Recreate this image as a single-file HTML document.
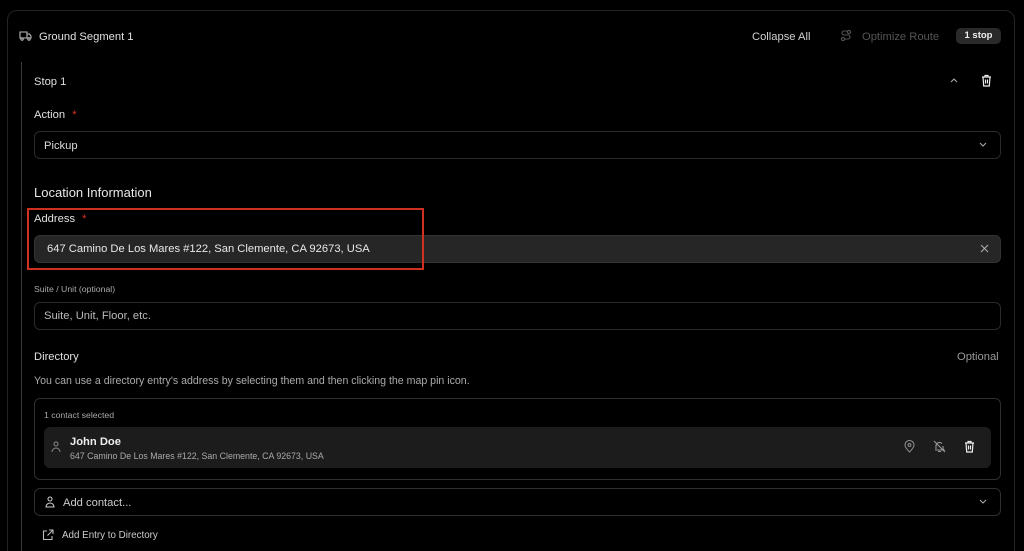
<!DOCTYPE html>
<html style="width:1024px;height:551px;overflow:hidden"><head><meta charset="utf-8"><style>
*{box-sizing:border-box;margin:0;padding:0}
body{width:1024px;height:551px;background:#000;font-family:"Liberation Sans",sans-serif;color:#e8e8e8;position:relative;overflow:hidden}
.a{position:absolute;white-space:nowrap;line-height:1}
.card{position:absolute;left:7px;top:10px;width:1008px;height:541px;border:1px solid #242424;border-bottom:none;border-radius:10px 10px 0 0}
.vl{position:absolute;left:21px;top:62px;width:1px;height:489px;background:#3a3a3a}
.box{position:absolute;left:34px;width:967px;border:1px solid #2a2a2a;border-radius:6px}
.red{color:#e0332a}
svg{position:absolute}
</style></head><body>
<div class="card"></div>
<div class="vl"></div>
<svg style="left:19px;top:30px" width="13" height="12" viewBox="0 0 13 12" fill="none" stroke="#bbb" stroke-width="1.1"><path d="M1 2h7v6H1zM8 4h2.5l1.5 2v2H8"/><circle cx="3" cy="9" r="1.2"/><circle cx="10" cy="9" r="1.2"/></svg>
<div class="a" style="left:39px;top:32px;font-size:11.2px;color:#e0e0e0">Ground Segment 1</div>
<div class="a" style="left:752px;top:32px;font-size:11.2px;color:#d0d0d0">Collapse All</div>
<svg style="left:840px;top:29px" width="12" height="13" viewBox="0 0 12 13" fill="none" stroke="#555" stroke-width="1.1"><circle cx="3" cy="10" r="1.6"/><circle cx="9" cy="3" r="1.6"/><path d="M4.6 10H8a2 2 0 0 0 0-4H4a2 2 0 0 1 0-4h3.4"/></svg>
<div class="a" style="left:862px;top:32px;font-size:11.2px;color:#555">Optimize Route</div>
<div class="a" style="left:956px;top:28px;width:45px;height:16px;background:#2a2a2a;border-radius:5px;font-size:9.5px;font-weight:bold;text-align:center;line-height:16px;color:#eee">1 stop</div>

<div class="a" style="left:34px;top:77px;font-size:11.2px;color:#e0e0e0">Stop 1</div>
<svg style="left:949px;top:77px" width="10" height="7" viewBox="0 0 10 7" fill="none" stroke="#aaa" stroke-width="1.1"><path d="M2 5l3-3 3 3"/></svg>
<svg style="left:981px;top:74px" width="11" height="13" viewBox="0 0 11 13" fill="none" stroke="#eee" stroke-width="1.2"><path d="M1 3h9M4 3V1.5h3V3M2 3l.7 9h5.6L9 3M4.5 5.5v4M6.5 5.5v4"/></svg>

<div class="a" style="left:34px;top:110px;font-size:11.2px;color:#e0e0e0">Action <span class="red" style="margin-left:4px">*</span></div>
<div class="box" style="top:131px;height:28px"></div>
<div class="a" style="left:44px;top:141px;font-size:11.2px;color:#ddd">Pickup</div>
<svg style="left:978px;top:141px" width="10" height="7" viewBox="0 0 10 7" fill="none" stroke="#aaa" stroke-width="1.1"><path d="M2 2l3 3 3-3"/></svg>

<div class="a" style="left:34px;top:186px;font-size:13px;color:#e8e8e8">Location Information</div>
<div class="a" style="left:34px;top:214px;font-size:11.2px;color:#e0e0e0">Address <span class="red" style="margin-left:4px">*</span></div>
<div class="box" style="top:235px;height:28px;background:#262626;border-color:#333"></div>
<div class="a" style="left:47px;top:244px;font-size:11.2px;color:#e8e8e8">647 Camino De Los Mares #122, San Clemente, CA 92673, USA</div>
<svg style="left:980px;top:244px" width="9" height="9" viewBox="0 0 9 9" stroke="#aaa" stroke-width="1.1"><path d="M1 1l7 7M8 1L1 8"/></svg>
<div class="a" style="left:27px;top:208px;width:397px;height:62px;border:2px solid #d0301f"></div>

<div class="a" style="left:34px;top:285px;font-size:8.7px;color:#aaa">Suite / Unit (optional)</div>
<div class="box" style="top:302px;height:28px"></div>
<div class="a" style="left:44px;top:311px;font-size:11.2px;color:#bbb">Suite, Unit, Floor, etc.</div>

<div class="a" style="left:34px;top:352px;font-size:11.2px;color:#e0e0e0">Directory</div>
<div class="a" style="left:957px;top:352px;font-size:11.2px;color:#999">Optional</div>
<div class="a" style="left:34px;top:376px;font-size:10.6px;color:#aaa">You can use a directory entry's address by selecting them and then clicking the map pin icon.</div>

<div class="box" style="top:398px;height:82px;border-color:#2e2e2e"></div>
<div class="a" style="left:44px;top:411px;font-size:8.7px;color:#aaa">1 contact selected</div>
<div class="a" style="left:44px;top:427px;width:947px;height:41px;background:#1c1c1c;border-radius:6px"></div>
<svg style="left:51px;top:441px" width="10" height="12" viewBox="0 0 10 12" fill="none" stroke="#888" stroke-width="1"><circle cx="5" cy="3" r="2"/><path d="M1 11a4 4 0 0 1 8 0"/></svg>
<div class="a" style="left:70px;top:437px;font-size:11.2px;font-weight:bold;color:#eee">John Doe</div>
<div class="a" style="left:70px;top:452px;font-size:8.8px;color:#aaa">647 Camino De Los Mares #122, San Clemente, CA 92673, USA</div>
<svg style="left:904px;top:440px" width="11" height="13" viewBox="0 0 11 13" fill="none" stroke="#888" stroke-width="1.1"><path d="M5.5 12S1 7.5 1 5a4.5 4.5 0 0 1 9 0c0 2.5-4.5 7-4.5 7z"/><circle cx="5.5" cy="5" r="1.4"/></svg>
<svg style="left:933px;top:440px" width="13" height="13" viewBox="0 0 13 13" fill="none" stroke="#999" stroke-width="1.1"><path d="M3 9V6a3.5 3.5 0 0 1 6-2.5M10 6v3l1 1H2M5 11.5h3M1 1l11 11"/></svg>
<svg style="left:964px;top:440px" width="11" height="13" viewBox="0 0 11 13" fill="none" stroke="#eee" stroke-width="1.2"><path d="M1 3h9M4 3V1.5h3V3M2 3l.7 9h5.6L9 3M4.5 5.5v4M6.5 5.5v4"/></svg>

<div class="box" style="top:488px;height:28px;border-color:#2e2e2e"></div>
<svg style="left:45px;top:496px" width="10" height="12" viewBox="0 0 10 12" fill="none" stroke="#ccc" stroke-width="1.1"><circle cx="5" cy="3" r="2"/><path d="M1 11a4 4 0 0 1 8 0z"/></svg>
<div class="a" style="left:63px;top:498px;font-size:11.2px;color:#ccc">Add contact...</div>
<svg style="left:978px;top:498px" width="10" height="7" viewBox="0 0 10 7" fill="none" stroke="#aaa" stroke-width="1.1"><path d="M2 2l3 3 3-3"/></svg>

<svg style="left:42px;top:529px" width="12" height="12" viewBox="0 0 12 12" fill="none" stroke="#bbb" stroke-width="1.1"><path d="M5 2H1.5v8.5H10V7M7 1h4v4M11 1L5.5 6.5"/></svg>
<div class="a" style="left:62px;top:531px;font-size:9.8px;color:#ccc">Add Entry to Directory</div>
</body></html>
